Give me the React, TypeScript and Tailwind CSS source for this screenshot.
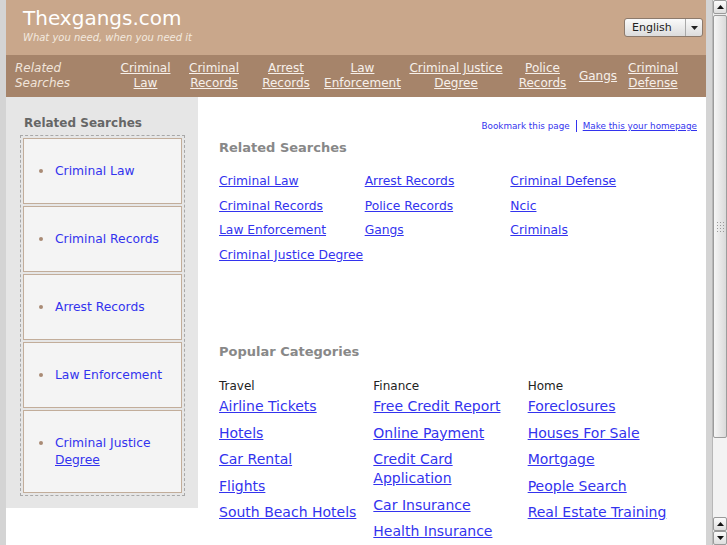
import React from "react";

const navItems: { lines: string[]; w: string }[] = [
  { lines: ["Criminal", "Law"], w: "w-[67px]" },
  { lines: ["Criminal", "Records"], w: "w-[70px]" },
  { lines: ["Arrest", "Records"], w: "w-[74px]" },
  { lines: ["Law", "Enforcement"], w: "w-[79px]" },
  { lines: ["Criminal Justice", "Degree"], w: "w-[108px]" },
  { lines: ["Police", "Records"], w: "w-[65px]" },
  { lines: ["Gangs"], w: "w-[46px]" },
  { lines: ["Criminal", "Defense"], w: "w-[64px]" },
];

const related = [
  "Criminal Law",
  "Arrest Records",
  "Criminal Defense",
  "Criminal Records",
  "Police Records",
  "Ncic",
  "Law Enforcement",
  "Gangs",
  "Criminals",
  "Criminal Justice Degree",
];

const categories = [
  {
    title: "Travel",
    links: ["Airline Tickets", "Hotels", "Car Rental", "Flights", "South Beach Hotels"],
  },
  {
    title: "Finance",
    links: [
      "Free Credit Report",
      "Online Payment",
      "Credit Card Application",
      "Car Insurance",
      "Health Insurance",
    ],
  },
  {
    title: "Home",
    links: ["Foreclosures", "Houses For Sale", "Mortgage", "People Search", "Real Estate Training"],
  },
];

function Header() {
  return (
    <div className="flex h-[55px] justify-between bg-[#c9a78b] pl-[17px] pr-[3px]">
      <div>
        <div className="pt-[6px] text-[20px] leading-[24px] text-white">Thexgangs.com</div>
        <div className="mt-[2px] text-[10px] italic leading-[12px] text-[#f3e9df]">
          What you need, when you need it
        </div>
      </div>
      <div className="mt-[18px] flex h-[19px] w-[79px] items-stretch rounded-[3px] border border-[#8c7a6c] bg-gradient-to-b from-[#fafafa] to-[#dcdcdc] text-[11px] text-[#222]">
        <span className="flex-1 pl-[7px] leading-[17px]">English</span>
        <span className="flex w-[17px] items-center justify-center border-l border-[#a9a9a9]">
          <svg width="7" height="4" viewBox="0 0 7 4">
            <path d="M0 0h7L3.5 4z" fill="#222" />
          </svg>
        </span>
      </div>
    </div>
  );
}

function Nav() {
  return (
    <div className="flex h-[42px] items-center bg-[#a6846a] text-[12px] leading-[15px] text-[#f7f0ea]">
      <div className="w-[106px] pl-[9px] italic text-[#f1e5db]">
        Related
        <br />
        Searches
      </div>
      {navItems.map((n) => (
        <a key={n.lines.join(" ")} href="#" className={`${n.w} text-center underline`}>
          {n.lines.map((l, i) => (
            <React.Fragment key={l}>
              {i > 0 && <br />}
              {l}
            </React.Fragment>
          ))}
        </a>
      ))}
    </div>
  );
}

function Sidebar() {
  const items = ["Criminal Law", "Criminal Records", "Arrest Records", "Law Enforcement"];
  return (
    <div className="w-[192px] self-start bg-[#e6e6e6] pb-[12px] pl-[14px] pt-[18px]">
      <div className="pl-[4px] text-[12px] font-bold leading-[16px] text-[#666]">Related Searches</div>
      <div className="mt-[4px] flex w-[165px] flex-col gap-[2px] border border-dashed border-[#a8a8a8] p-[2px]">
        {items.map((t) => (
          <div key={t} className="flex border border-[#c2ad9a] bg-[#f4f4f4] py-[23.5px] pl-[15px] text-[12.3px] leading-[17px]">
            <span className="mt-[6.5px] h-[4px] w-[4px] shrink-0 rounded-full bg-[#a98b75]" />
            <a href="#" className="ml-[12px] text-[#3333ee]">
              {t}
            </a>
          </div>
        ))}
        <div className="flex border border-[#c2ad9a] bg-[#f4f4f4] py-[23.5px] pl-[15px] text-[12.3px] leading-[17px]">
          <span className="mt-[6.5px] h-[4px] w-[4px] shrink-0 rounded-full bg-[#a98b75]" />
          <a href="#" className="ml-[12px] text-[#3333ee]">
            Criminal Justice
            <br />
            <span className="underline">Degree</span>
          </a>
        </div>
      </div>
    </div>
  );
}

function Main() {
  return (
    <div className="flex-1 bg-white pl-[21px]">
      <div className="mt-[23px] flex justify-end pr-[9px] text-[8.8px] leading-[12px] text-[#3333ee]">
        <a href="#">Bookmark this page</a>
        <a href="#" className="ml-[6px] border-l border-[#3333ee] pl-[6px] underline">
          Make this your homepage
        </a>
      </div>
      <div className="mt-[8px] text-[13px] font-bold leading-[16px] text-[#888]">Related Searches</div>
      <div className="mt-[17px] grid w-[437px] grid-cols-3 gap-y-[8.5px] text-[12.3px] leading-[16px]">
        {related.map((r) => (
          <a key={r} href="#" className="whitespace-nowrap text-[#3333ee] underline">
            {r}
          </a>
        ))}
      </div>
      <div className="mt-[81px] text-[13px] font-bold leading-[16px] text-[#888]">Popular Categories</div>
      <div className="mt-[18px] grid w-[463px] grid-cols-3">
        {categories.map((c) => (
          <div key={c.title} className="pr-[8px]">
            <div className="text-[12px] leading-[16px] text-[#222]">{c.title}</div>
            <div className="mt-[3.5px] flex flex-col gap-[7.6px] text-[14px] leading-[19px]">
              {c.links.map((l) => (
                <a key={l} href="#" className="text-[#3333ee] underline">
                  {l}
                </a>
              ))}
            </div>
          </div>
        ))}
      </div>
    </div>
  );
}

function Arrow({ down }: { down?: boolean }) {
  return (
    <div className="flex h-[14px] items-center justify-center rounded-[2px] border border-[#9a9a9a] bg-gradient-to-b from-[#fbfbfb] to-[#dedede]">
      <svg width="7" height="4" viewBox="0 0 7 4">
        <path d={down ? "M0 0h7L3.5 4z" : "M0 4h7L3.5 0z"} fill="#111" />
      </svg>
    </div>
  );
}

function Scrollbar() {
  return (
    <div className="flex w-[15px] flex-col border-l border-[#b8b8b8] bg-[#ededed]">
      <Arrow />
      <div className="mt-[1px] flex h-[423px] items-center justify-center rounded-[2px] border border-[#9c9c9c] bg-gradient-to-r from-[#f6f6f6] to-[#dadada]">
        <div className="grid grid-cols-3 gap-[2px]">
          {Array.from({ length: 12 }).map((_, i) => (
            <span key={i} className="h-[1px] w-[1px] bg-[#9a9a9a]" />
          ))}
        </div>
      </div>
      <div className="flex-1 bg-[#f3f3f3]" />
      <Arrow />
      <Arrow down />
    </div>
  );
}

export default function App() {
  return (
    <div className="flex h-[545px] w-[727px] overflow-hidden bg-[#d4d4d4] font-['DejaVu_Sans',sans-serif]">
      <div className="flex w-[712px] flex-col px-[6px]">
        <Header />
        <Nav />
        <div className="flex flex-1 bg-white">
          <Sidebar />
          <Main />
        </div>
      </div>
      <Scrollbar />
    </div>
  );
}
